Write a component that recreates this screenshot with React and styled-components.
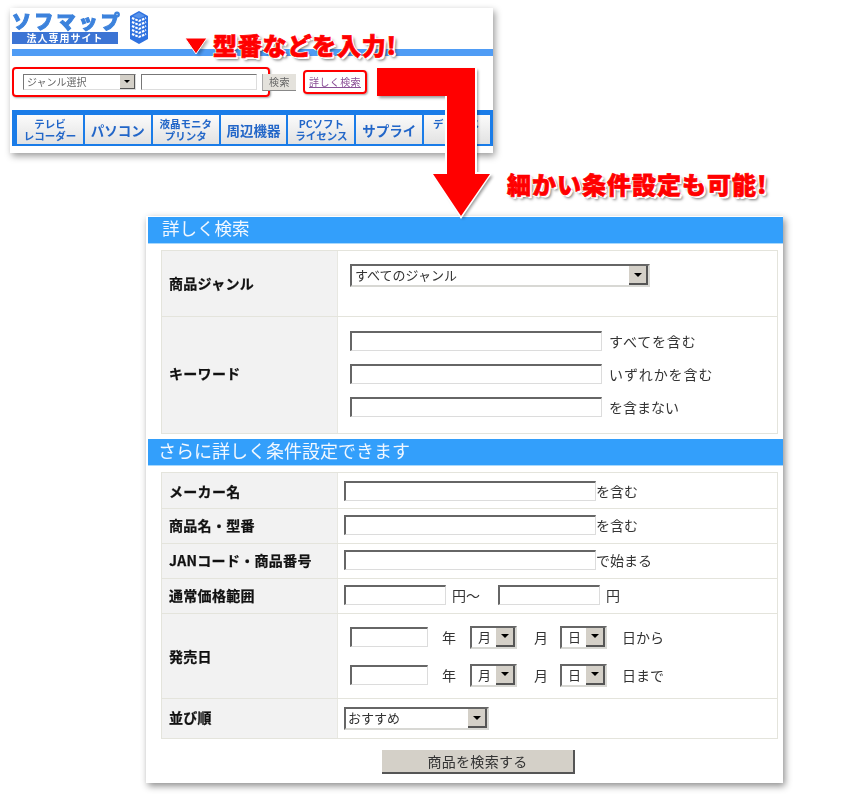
import React from 'react'
import styled, { createGlobalStyle } from 'styled-components'

const GlobalStyle = createGlobalStyle`
  html, body { margin: 0; padding: 0; background: #fff; }
  body { font-family: "Noto Sans CJK JP", "Liberation Sans", sans-serif; color: #222; }
`

const Page = styled.div`
  position: relative;
  width: 850px;
  height: 810px;
  overflow: hidden;
  padding: 8px 0 0 10px;
  box-sizing: border-box;
`

/* top screenshot */
const TopCard = styled.div`
  width: 483px;
  height: 145px;
  background: #fff;
  box-shadow: 2px 3px 7px rgba(0, 0, 0, 0.4);
  padding-left: 2px;
  box-sizing: border-box;
  overflow: hidden;
  filter: blur(0.35px);
`
const LogoRow = styled.div`
  display: flex;
  gap: 11px;
  height: 41px;
  padding-top: 3px;
  box-sizing: border-box;
`
const LogoText = styled.div`
  width: 106px;
  display: flex;
  flex-direction: column;
  gap: 1px;
`
const LogoName = styled.div`
  font-size: 19px;
  line-height: 20px;
  font-weight: 900;
  color: #3c82dc;
  letter-spacing: 3.2px;
  white-space: nowrap;
  -webkit-text-stroke: 1px #3c82dc;
`
const LogoSub = styled.div`
  height: 12px;
  background: #3c74d4;
  color: #fff;
  font-size: 10px;
  line-height: 12px;
  font-weight: 700;
  text-align: center;
  letter-spacing: 1px;
`
const BuildingIcon = styled.svg`
  flex: none;
`
const HeadBar = styled.div`
  height: 7px;
  background: #4f9cf5;
`
const SearchRow = styled.div`
  display: flex;
  align-items: center;
  height: 54px;
  padding-bottom: 2px;
  box-sizing: border-box;
`
const RedBox = styled.div`
  display: flex;
  align-items: center;
  gap: 5px;
  height: ${(p) => p.$height}px;
  margin-left: ${(p) => p.$left}px;
  padding: ${(p) => p.$pad};
  border: 2px solid #f00;
  border-radius: 4px;
  box-sizing: border-box;
  box-shadow: 1px 1px 2px rgba(0, 0, 0, 0.35);
`
const SmallSelect = styled.div`
  display: flex;
  justify-content: space-between;
  width: 113px;
  height: 16px;
  border: 1px solid;
  border-color: #777 #ddd #ddd #777;
  box-sizing: border-box;
  font-size: 10px;
  line-height: 14px;
  color: #666;
  padding-left: 3px;
`
const SmallInput = styled.input`
  width: 116px;
  height: 16px;
  padding: 0;
  background: #fff;
  border: 1px solid;
  border-color: #777 #ddd #ddd #777;
  box-sizing: border-box;
`
const SmallButton = styled.div`
  width: 34px;
  height: 17px;
  margin-left: -8px;
  flex: none;
  background: #e4e2dc;
  border-bottom: 1px solid #888;
  border-left: 1px solid #aaa;
  color: #666;
  font-size: 10px;
  line-height: 16px;
  text-align: center;
  letter-spacing: 0.5px;
  box-sizing: border-box;
`
const SmallLink = styled.a`
  color: #8a4f96;
  font-size: 10px;
  line-height: 14px;
  letter-spacing: 0.4px;
  text-decoration: underline;
`
const TabBar = styled.div`
  display: flex;
  gap: 2px;
  height: 36px;
  padding: 5px 3px 2px 5px;
  background: #1a7ce8;
  box-sizing: border-box;
`
const Tab = styled.div`
  flex: 1;
  display: flex;
  align-items: center;
  justify-content: center;
  text-align: center;
  white-space: pre-line;
  background: linear-gradient(#fbfbfb, #e2e2e2);
  color: #2266c8;
  font-weight: 700;
  font-size: ${(p) => (p.$big ? 13.5 : 10.5)}px;
  line-height: 12px;
  letter-spacing: ${(p) => p.$spacing || 0}px;
`

/* big panel */
const Panel = styled.div`
  width: 637px;
  height: 567px;
  margin: 63px 0 0 136px;
  padding: 1px 0 0 2px;
  background: #fff;
  box-sizing: border-box;
  box-shadow: 2px 3px 7px rgba(0, 0, 0, 0.45);
  filter: blur(0.25px);
`
const Band = styled.div`
  height: 27px;
  padding-left: ${(p) => p.$pad}px;
  background: #339ffb;
  border-bottom: 1px solid #a8d8fc;
  box-sizing: border-box;
  color: #f2f8ff;
  font-size: ${(p) => p.$size}px;
  line-height: 22px;
`
const Table = styled.div`
  margin: 6px 5px 5px 13px;
  border: 1px solid #e4e4dc;
`
const Row = styled.div`
  display: grid;
  grid-template-columns: 176px 1fr;
  height: ${(p) => p.$h}px;
  border-bottom: ${(p) => (p.$last ? 'none' : '1px solid #e4e4dc')};
  box-sizing: border-box;
`
const Label = styled.div`
  display: flex;
  align-items: center;
  padding: 0 0 ${(p) => p.$lift || 0}px 7px;
  background: #f2f2f2;
  border-right: 1px solid #e8e8e2;
  font-size: 14px;
  font-weight: 700;
  color: #111;
  letter-spacing: 0.3px;
  -webkit-text-stroke: 0.25px #111;
`
const Value = styled.div`
  display: flex;
  flex-direction: column;
  justify-content: ${(p) => (p.$top ? 'flex-start' : 'center')};
  gap: ${(p) => p.$gap || 0}px;
  padding: ${(p) => (p.$top ? 13 : 0)}px 0 ${(p) => p.$lift || 0}px ${(p) => p.$pad}px;
`
const Line = styled.div`
  display: flex;
  align-items: center;
`
const Field = styled.input`
  width: ${(p) => p.$w}px;
  height: 20px;
  margin-left: ${(p) => p.$left || 0}px;
  padding: 0;
  flex: none;
  background: #fff;
  border-style: solid;
  border-color: #666 #dcdcdc #dcdcdc #666;
  border-width: 2px 1px 1px 2px;
  box-sizing: border-box;
`
const Note = styled.span`
  margin-left: ${(p) => p.$left || 0}px;
  font-size: 14px;
  line-height: 20px;
  letter-spacing: ${(p) => (p.$wide ? 0.9 : 0)}px;
  color: #333;
  white-space: nowrap;
`
const SelectBox = styled.div`
  display: flex;
  justify-content: space-between;
  width: ${(p) => p.$w}px;
  height: 23px;
  margin-left: ${(p) => p.$left || 0}px;
  flex: none;
  background: #fff;
  border: 2px solid;
  border-color: #666 #d8d8d4 #d8d8d4 #666;
  box-sizing: border-box;
  padding-left: ${(p) => p.$textPad || 2}px;
  font-size: 13px;
  line-height: 18px;
  color: #333;
`
const DropButton = styled.div`
  width: 19px;
  height: 100%;
  flex: none;
  display: flex;
  align-items: center;
  justify-content: center;
  background: #d4d0c8;
  border-right: 2px solid #555;
  border-bottom: 2px solid #555;
  box-sizing: border-box;
  &::after {
    content: '';
    border-style: solid;
    border-width: 4px 4px 0;
    border-color: #000 transparent transparent;
  }
`
const SmallDrop = styled(DropButton)`
  width: 15px;
  border-width: 1px;
  &::after {
    border-width: 3px 3px 0;
  }
`
const SubmitRow = styled.div`
  padding: 6px 0 0 234px;
`
const Submit = styled.button`
  display: block;
  width: 193px;
  height: 24px;
  padding: 0;
  background: #d4d0c8;
  border: none;
  border-right: 2px solid #555;
  border-bottom: 2px solid #555;
  font-family: inherit;
  font-size: 14px;
  line-height: 22px;
  letter-spacing: 0.3px;
  color: #333;
`

/* overlays */
const Callout = styled.div`
  position: absolute;
  left: ${(p) => p.$x}px;
  top: ${(p) => p.$y}px;
  color: #f00;
  font-size: 24px;
  line-height: 28px;
  font-weight: 900;
  letter-spacing: ${(p) => p.$spacing}px;
  white-space: nowrap;
  -webkit-text-stroke: 0.7px #f00;
  text-shadow: -1px -1px 0 #fff, 1px -1px 0 #fff, -1px 1px 0 #fff, 2px 2px 0 #fff, 3px 3px 3px rgba(0, 0, 0, 0.55);
`
const Overlay = styled.svg`
  position: absolute;
  left: 0;
  top: 0;
  pointer-events: none;
`

const Building = () => (
  <BuildingIcon width="20" height="33" viewBox="0 0 20 33">
    <path d="M10 0 L19 5 V28 L10 33 L1 28 V5 Z" fill="#2f72e0" />
    {[7, 11, 15, 19, 23].map((y) => (
      <path
        key={y}
        d={`M3 ${y} L10 ${y + 3} L17 ${y}`}
        fill="none"
        stroke="#fff"
        strokeWidth="2"
        strokeDasharray="2.6 1"
      />
    ))}
    <path d="M10 1.5 L16 5 L10 7.5 L4 5 Z" fill="#5a94ea" />
  </BuildingIcon>
)

const Arrows = () => (
  <Overlay width="850" height="810" viewBox="0 0 850 810">
    <defs>
      <filter id="soft" x="-10%" y="-10%" width="130%" height="130%">
        <feGaussianBlur stdDeviation="1.6" />
      </filter>
    </defs>
    <path d="M379 70 H478 V176 H493 L463 219 L435 176 H450 V98 H379 Z" fill="#000" opacity="0.4" filter="url(#soft)" />
    <path d="M377 96 H445 V172 H429 L461 219 L493 172 H477 V68 H475 V96 Z" fill="#fff" />
    <path d="M377 68 H475 V174 H490 L461 216 L433 174 H447 V96 H377 Z" fill="#f00" />
    <path d="M186 38 H207 L197 54 Z" fill="#000" opacity="0.3" transform="translate(2 2)" filter="url(#soft)" />
    <path d="M185 38 H207 L196 54 Z" fill="#f00" stroke="#fff" strokeWidth="1" />
  </Overlay>
)

const dateLine = (end) => (
  <Line>
    <Field $w={78} />
    <Note $left={14}>年</Note>
    <SelectBox $w={47} $left={14} $textPad={6}>月<DropButton /></SelectBox>
    <Note $left={17}>月</Note>
    <SelectBox $w={47} $left={12} $textPad={6}>日<DropButton /></SelectBox>
    <Note $left={15}>{end}</Note>
  </Line>
)

const tabs = [
  { label: 'テレビ\nレコーダー' },
  { label: 'パソコン', big: true },
  { label: '液晶モニタ\nプリンタ' },
  { label: '周辺機器', big: true },
  { label: 'PCソフト\nライセンス' },
  { label: 'サプライ', big: true },
  { label: 'デジカメ\n\u00a0', spacing: 1.5 },
]

const App = () => {
  return (
    <Page>
      <GlobalStyle />
      <TopCard>
        <LogoRow>
          <LogoText>
            <LogoName>ソフマップ</LogoName>
            <LogoSub>法人専用サイト</LogoSub>
          </LogoText>
          <Building />
        </LogoRow>
        <HeadBar />
        <SearchRow>
          <RedBox $height={30} $left={0} $pad="0 11px 0 9px">
            <SmallSelect>ジャンル選択<SmallDrop /></SmallSelect>
            <SmallInput />
          </RedBox>
          <SmallButton>検索</SmallButton>
          <RedBox $height={24} $left={7} $pad="0 4px">
            <SmallLink>詳しく検索</SmallLink>
          </RedBox>
        </SearchRow>
        <TabBar>
          {tabs.map((tab) => (
            <Tab key={tab.label} $big={tab.big} $spacing={tab.spacing}>{tab.label}</Tab>
          ))}
        </TabBar>
      </TopCard>

      <Panel>
        <Band $pad={14} $size={17.5}>詳しく検索</Band>
        <Table>
          <Row $h={66}>
            <Label $lift={2}>商品ジャンル</Label>
            <Value $pad={12} $top>
              <SelectBox $w={300} $textPad={3}>すべてのジャンル<DropButton /></SelectBox>
            </Value>
          </Row>
          <Row $h={116} $last>
            <Label $lift={4}>キーワード</Label>
            <Value $pad={12} $gap={13} $lift={2}>
              <Line><Field $w={252} /><Note $left={7} $wide>すべてを含む</Note></Line>
              <Line><Field $w={252} /><Note $left={7} $wide>いずれかを含む</Note></Line>
              <Line><Field $w={252} /><Note $left={7}>を含まない</Note></Line>
            </Value>
          </Row>
        </Table>
        <Band $pad={10} $size={18}>さらに詳しく条件設定できます</Band>
        <Table>
          <Row $h={36}>
            <Label>メーカー名</Label>
            <Value $pad={6}><Line><Field $w={252} /><Note>を含む</Note></Line></Value>
          </Row>
          <Row $h={35}>
            <Label $lift={2}>商品名・型番</Label>
            <Value $pad={6} $lift={2}><Line><Field $w={252} /><Note>を含む</Note></Line></Value>
          </Row>
          <Row $h={35}>
            <Label $lift={2}>JANコード・商品番号</Label>
            <Value $pad={6} $lift={2}><Line><Field $w={252} /><Note>で始まる</Note></Line></Value>
          </Row>
          <Row $h={35}>
            <Label $lift={2}>通常価格範囲</Label>
            <Value $pad={6} $lift={2}>
              <Line>
                <Field $w={102} />
                <Note $left={6}>円～</Note>
                <Field $w={102} $left={18} />
                <Note $left={6}>円</Note>
              </Line>
            </Value>
          </Row>
          <Row $h={85}>
            <Label>発売日</Label>
            <Value $pad={12} $gap={15}>
              {dateLine('日から')}
              {dateLine('日まで')}
            </Value>
          </Row>
          <Row $h={39} $last>
            <Label $lift={3}>並び順</Label>
            <Value $pad={6}>
              <SelectBox $w={145}>おすすめ<DropButton /></SelectBox>
            </Value>
          </Row>
        </Table>
        <SubmitRow>
          <Submit>商品を検索する</Submit>
        </SubmitRow>
      </Panel>

      <Arrows />
      <Callout $x={213} $y={31} $spacing={0.8}>型番などを入力!</Callout>
      <Callout $x={507} $y={170} $spacing={1}>細かい条件設定も可能!</Callout>
    </Page>
  )
}

export default App
